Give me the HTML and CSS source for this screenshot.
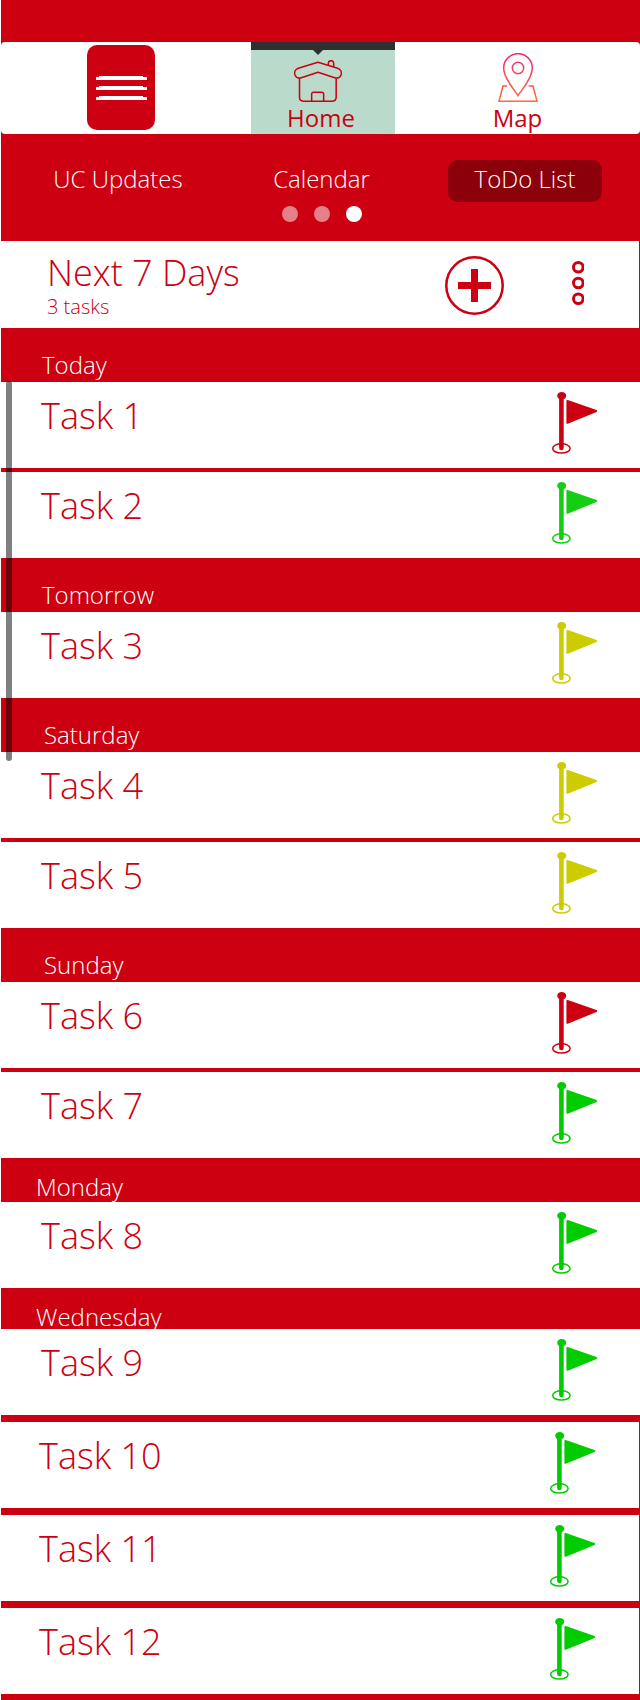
FILE: index.html
```html
<!DOCTYPE html>
<html lang="en">
<head>
<meta charset="utf-8">
<meta name="viewport" content="width=device-width, initial-scale=1">
<title>ToDo List</title>
<link rel="stylesheet" href="styles.css">
</head>
<body>
<svg class="symbols" aria-hidden="true">
  <symbol id="flag" viewBox="0 0 48 64">
    <ellipse cx="10.4" cy="57.4" rx="8.7" ry="4.7" fill="none" stroke="currentColor" stroke-width="1.5"/>
    <ellipse cx="10.7" cy="4.8" rx="4.5" ry="3.9" fill="currentColor"/>
    <path d="M10.4 6v51" fill="none" stroke="currentColor" stroke-width="4.6" stroke-linecap="round"/>
    <path d="M16.4 9.9 45.2 20 16.4 31.8z" fill="currentColor" stroke="currentColor" stroke-width="2" stroke-linejoin="round"/>
  </symbol>
</svg>
<div class="app">
  <nav class="nav">
    <div class="nav-menu">
      <button class="menu-button" type="button" aria-label="Menu">
        <svg width="51" height="24" viewBox="0 0 51 24" fill="#fff">
          <path d="M0 1h3V0h44v1h4v3H0zM0 11h3v-1h44v1h4v3H0zM0 21h3v-1h44v1h4v3H0z"/>
        </svg>
      </button>
    </div>
    <a class="nav-tab nav-tab-active" href="#home">
      <svg class="nav-icon" width="48" height="42" viewBox="162 90 144 126" fill="none" stroke="#cc0010" stroke-width="4.6" stroke-linejoin="round" stroke-linecap="round">
        <path d="M234 97 175 115C166 118 162 126 165 135 168 143 176 146 184 143L234 127 284 143C292 146 300 143 303 135 306 126 302 118 293 115Z"/>
        <path d="M178.500 146V202Q178.500 213.500 190 213.500H277Q288.500 213.500 288.500 202V146"/>
        <path d="M215 213V193Q215 187 221 187H245Q251 187 251 193V213M265 104V100Q265 92 273 92T281 100V109"/>
      </svg>
      <span>Home</span>
    </a>
    <a class="nav-tab" href="#map">
      <svg class="nav-icon" width="40" height="49" viewBox="777 69 120 147" fill="none" stroke="url(#pin)" stroke-width="4.6">
        <defs>
          <linearGradient id="pin" gradientUnits="userSpaceOnUse" x1="0" y1="69" x2="0" y2="216">
            <stop offset="0" stop-color="#f02a75"/>
            <stop offset="1" stop-color="#ff6a3c"/>
          </linearGradient>
        </defs>
        <path d="M837 197C826 178 794 147 794 114A43 43 0 0 1 880 114C880 147 848 178 837 197Z"/>
        <circle cx="837" cy="114" r="17"/>
        <path d="M804 168H792L780 213.500H894L882 168H869"/>
      </svg>
      <span>Map</span>
    </a>
  </nav>

  <div class="pages">
    <div class="page-tabs">
      <a class="page-tab" href="#updates">UC Updates</a>
      <a class="page-tab" href="#calendar">Calendar</a>
      <a class="page-tab page-tab-active" href="#todo">ToDo List</a>
    </div>
    <div class="dots">
      <span class="dot"></span>
      <span class="dot"></span>
      <span class="dot dot-active"></span>
    </div>
  </div>

  <header class="summary">
    <div class="summary-text">
      <h1 class="title">Next 7 Days</h1>
      <p class="count">3 tasks</p>
    </div>
    <button class="icon-button add" type="button" aria-label="Add task">
      <svg width="59" height="59" viewBox="0 0 59 59" fill="none" stroke="#cc0010">
        <circle cx="29.500" cy="29.500" r="28.200" stroke-width="2.500"/>
        <path d="M29.500 13v33M13 29.500h33" stroke-width="7"/>
      </svg>
    </button>
    <button class="icon-button more" type="button" aria-label="More options">
      <svg width="12" height="44" viewBox="0 0 12 44" fill="none" stroke="#cc0010" stroke-width="3">
        <circle cx="6.300" cy="6.300" r="4.800"/>
        <circle cx="6.300" cy="22" r="4.800"/>
        <circle cx="6.300" cy="37.700" r="4.800"/>
      </svg>
    </button>
  </header>

  <main class="list">
    <h2 class="day">Today</h2>
    <ul class="tasks">
      <li class="task">Task 1<svg class="flag red"><use href="#flag"/></svg></li>
      <li class="task">Task 2<svg class="flag lime"><use href="#flag"/></svg></li>
    </ul>
    <h2 class="day">Tomorrow</h2>
    <ul class="tasks">
      <li class="task">Task 3<svg class="flag yellow"><use href="#flag"/></svg></li>
    </ul>
    <h2 class="day day-weekend">Saturday</h2>
    <ul class="tasks">
      <li class="task">Task 4<svg class="flag yellow"><use href="#flag"/></svg></li>
      <li class="task">Task 5<svg class="flag yellow"><use href="#flag"/></svg></li>
    </ul>
    <h2 class="day day-weekend">Sunday</h2>
    <ul class="tasks">
      <li class="task">Task 6<svg class="flag red"><use href="#flag"/></svg></li>
      <li class="task">Task 7<svg class="flag green"><use href="#flag"/></svg></li>
    </ul>
    <h2 class="day day-later">Monday</h2>
    <ul class="tasks">
      <li class="task">Task 8<svg class="flag green"><use href="#flag"/></svg></li>
    </ul>
    <h2 class="day day-later day-short">Wednesday</h2>
    <ul class="tasks tasks-spaced">
      <li class="task">Task 9<svg class="flag green"><use href="#flag"/></svg></li>
      <li class="task task-inset">Task 10<svg class="flag green"><use href="#flag"/></svg></li>
      <li class="task task-inset">Task 11<svg class="flag green"><use href="#flag"/></svg></li>
      <li class="task task-inset">Task 12<svg class="flag green"><use href="#flag"/></svg></li>
    </ul>
    <div class="scroll-thumb"></div>
  </main>
</div>
</body>
</html>
```

FILE: styles.css
```css
* {
  box-sizing: border-box;
}

body {
  margin: 0;
  background: #fff;
  font-family: "Open Sans", "Noto Sans", sans-serif;
  font-weight: 300;
}

h1,
h2,
p,
ul {
  margin: 0;
  padding: 0;
  font-weight: 300;
}

a {
  color: inherit;
  text-decoration: none;
}

button {
  display: block;
  padding: 0;
  border: 0;
  background: none;
  cursor: pointer;
}

svg {
  display: block;
}

.symbols {
  position: absolute;
  width: 0;
  height: 0;
}

.app {
  margin-left: 1px;
  padding: 42px 0 6px;
  background: #cc0010;
}

/* Main navigation */
.nav {
  display: grid;
  grid-template-columns: 250fr 144px 245fr;
  height: 92px;
  overflow: hidden;
  border-radius: 4px;
  background: #fff;
}

.nav-menu {
  display: flex;
  align-items: center;
  justify-content: center;
  padding: 0 10px 1px 0;
}

.menu-button {
  display: grid;
  place-items: center;
  width: 68px;
  height: 85px;
  border-radius: 10px;
  background: #cc0010;
}

.nav-tab {
  display: flex;
  flex-direction: column;
  align-items: center;
  justify-content: flex-end;
  gap: 2px;
  padding-bottom: 2px;
  color: #cc0010;
  font-size: 24px;
  font-weight: 400;
  line-height: 28px;
}

.nav-tab-active {
  position: relative;
  padding-right: 4px;
  border-top: 8px solid #2f2f31;
  background: #badbcc;
}

.nav-tab-active .nav-icon {
  margin-right: 6px;
}

.nav-tab-active::before {
  content: "";
  position: absolute;
  top: 0;
  left: 62px;
  border: 5px solid transparent;
  border-top-color: #2f2f31;
  border-bottom: 0;
}

/* Page switcher */
.pages {
  padding: 26px 38px 19px 40px;
  color: #fff;
}

.page-tabs {
  display: flex;
  justify-content: space-between;
}

.page-tab {
  width: 154px;
  border-radius: 10px;
  font-size: 24px;
  line-height: 38px;
  padding-bottom: 4px;
  text-align: center;
}

.page-tab-active {
  background: #8c000b;
}

.dots {
  display: flex;
  justify-content: center;
  gap: 16px;
  margin-top: 4px;
}

.dot {
  width: 16px;
  height: 16px;
  border-radius: 50%;
  background: rgba(255, 255, 255, 0.5);
}

.dot-active {
  background: #fff;
}

/* Summary bar */
.summary {
  display: flex;
  align-items: center;
  margin-right: 1px;
  padding: 9px 55px 10px 46px;
  background: #fff;
  color: #cc0010;
}

.summary-text {
  flex: 1;
}

.title {
  font-size: 36px;
  line-height: 46px;
}

.count {
  font-size: 20px;
  line-height: 22px;
}

.add {
  padding-top: 3px;
}

.more {
  margin-left: 68px;
  padding-bottom: 2px;
}

/* Task list */
.list {
  position: relative;
}

.day {
  height: 54px;
  padding: 21px 41px 0;
  color: #fff;
  font-size: 24px;
  line-height: 32px;
}

.day-weekend {
  padding-left: 43px;
}

.day-later {
  height: 44px;
  padding: 13px 35px 0;
}

.day-short {
  height: 41px;
}

.tasks {
  display: grid;
  gap: 4px;
  list-style: none;
}

.tasks-spaced {
  gap: 7px;
}

.task {
  display: flex;
  justify-content: space-between;
  padding: 9px 41px 13px 40px;
  background: #fff;
  color: #cc0010;
  font-size: 36px;
  line-height: 50px;
}

.task-inset {
  margin-right: 1px;
  padding-right: 42px;
  padding-left: 38px;
}

.flag {
  width: 48px;
  height: 64px;
}

.red {
  color: #cc0010;
}

.lime {
  color: #14ce14;
}

.green {
  color: #00cc00;
}

.yellow {
  color: #cccc00;
}

.scroll-thumb {
  position: absolute;
  top: 53px;
  left: 5px;
  width: 6px;
  height: 380px;
  border-radius: 3px;
  background: rgba(0, 0, 0, 0.5);
}
```
